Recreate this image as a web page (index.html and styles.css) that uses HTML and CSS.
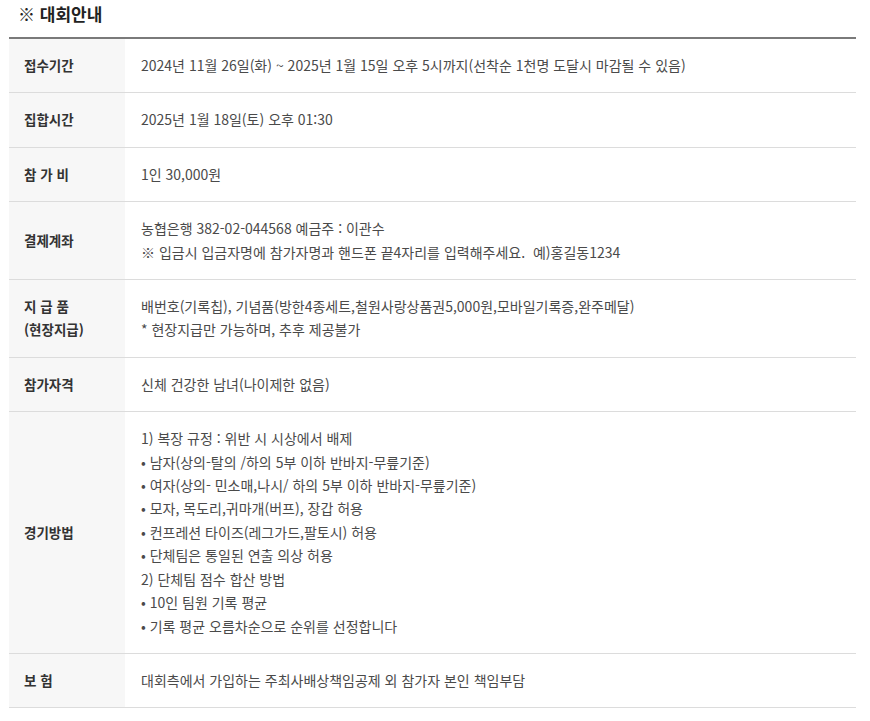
FILE: index.html
```html
<!DOCTYPE html>
<html lang="ko">
<head>
<meta charset="utf-8">
<link rel="stylesheet" href="styles.css">
</head>
<body>
<div class="wrap">
  <h2 class="title">※ 대회안내</h2>
  <table class="info">
    <tr><th>접수기간</th><td>2024년 11월 26일(화) ~ 2025년 1월 15일 오후 5시까지(선착순 1천명 도달시 마감될 수 있음)</td></tr>
    <tr><th>집합시간</th><td>2025년 1월 18일(토) 오후 01:30</td></tr>
    <tr><th>참 가 비</th><td>1인 30,000원</td></tr>
    <tr><th>결제계좌</th><td>농협은행 382-02-044568 예금주 : 이관수<br>※ 입금시 입금자명에 참가자명과 핸드폰 끝4자리를 입력해주세요.&nbsp; 예)홍길동1234</td></tr>
    <tr><th>지 급 품<br>(현장지급)</th><td>배번호(기록칩), 기념품(방한4종세트,철원사랑상품권5,000원,모바일기록증,완주메달)<br>* 현장지급만 가능하며, 추후 제공불가</td></tr>
    <tr><th>참가자격</th><td>신체 건강한 남녀(나이제한 없음)</td></tr>
    <tr><th>경기방법</th><td>1) 복장 규정 : 위반 시 시상에서 배제<br>• 남자(상의-탈의 /하의 5부 이하 반바지-무릎기준)<br>• 여자(상의- 민소매,나시/ 하의 5부 이하 반바지-무릎기준)<br>• 모자, 목도리,귀마개(버프), 장갑 허용<br>• 컨프레션 타이즈(레그가드,팔토시) 허용<br>• 단체팀은 통일된 연출 의상 허용<br>2) 단체팀 점수 합산 방법<br>• 10인 팀원 기록 평균<br>• 기록 평균 오름차순으로 순위를 선정합니다</td></tr>
    <tr><th>보 험</th><td>대회측에서 가입하는 주최사배상책임공제 외 참가자 본인 책임부담</td></tr>
  </table>
</div>
</body>
</html>
```
FILE: styles.css
```css
html, body {
  margin: 0;
  padding: 0;
  background: #fff;
}
body {
  font-family: "Noto Sans CJK KR", "Noto Sans", sans-serif;
  color: #444;
}
.wrap {
  padding: 0 14px 0 9px;
}
.title {
  margin: 0;
  padding: 3px 0 0 9px;
  height: 34px;
  font-size: 17px;
  font-weight: bold;
  color: #222;
  line-height: 22px;
}
.info {
  width: 100%;
  border-collapse: collapse;
  border-top: 2px solid #7a7a7a;
  font-size: 14px;
  line-height: 23.4px;
}
.info th, .info td {
  border-bottom: 1px solid #dcdcdc;
  padding: 15px 15px;
  vertical-align: middle;
  text-align: left;
}
.info th {
  width: 86px;
  background: #f7f7f7;
  color: #333;
  font-weight: bold;
  font-size: 13.5px;
}
.info td {
  padding-left: 16px;
  color: #4a4a4a;
}
```
